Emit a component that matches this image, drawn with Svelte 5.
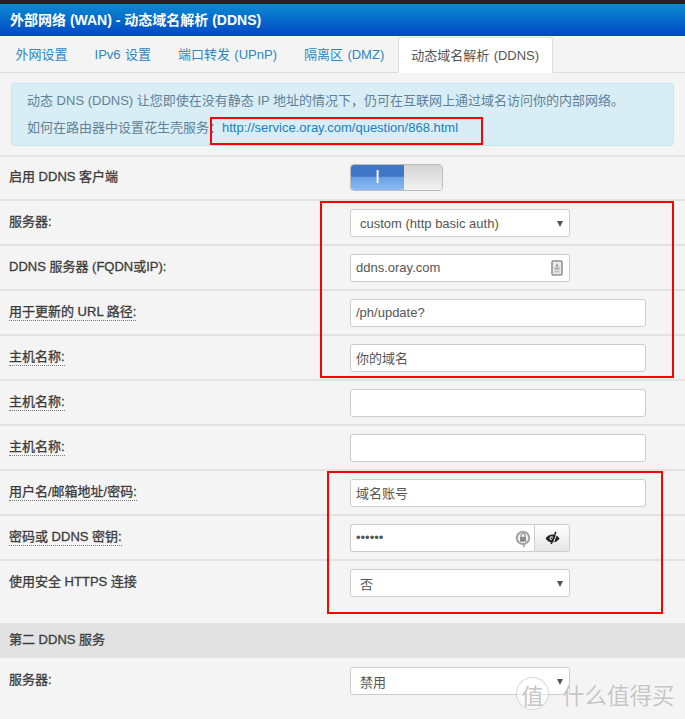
<script lang="ts">
  const rows = [
    { label: "服务器:", kind: "select", value: "custom (http basic auth)" },
    { label: "DDNS 服务器 (FQDN或IP):", kind: "text", value: "ddns.oray.com", short: true, icon: "key" },
    { label: "用于更新的 URL 路径:", kind: "text", value: "/ph/update?", hint: true },
    { label: "主机名称:", kind: "text", value: "你的域名", hint: true },
    { label: "主机名称:", kind: "text", value: "", hint: true },
    { label: "主机名称:", kind: "text", value: "", hint: true },
    { label: "用户名/邮箱地址/密码:", kind: "text", value: "域名账号", hint: true },
    { label: "密码或 DDNS 密钥:", kind: "password", value: "••••••", hint: true },
    { label: "使用安全 HTTPS 连接", kind: "select", value: "否" }
  ];
  const tabs = ["外网设置", "IPv6 设置", "端口转发 (UPnP)", "隔离区 (DMZ)", "动态域名解析 (DDNS)"];
</script>

<div class="page">
  <div class="topbar"></div>
  <h3 class="title">外部网络 (WAN) - 动态域名解析 (DDNS)</h3>

  <ul class="tabs">
    {#each tabs as tab, i}
      <li class:active={i === tabs.length - 1}>{tab}</li>
    {/each}
  </ul>

  <div class="alert">
    <div>动态 DNS (DDNS) 让您即使在没有静态 IP 地址的情况下，仍可在互联网上通过域名访问你的内部网络。</div>
    <div>如何在路由器中设置花生壳服务：<a href="#top">http://service.oray.com/question/868.html</a></div>
  </div>

  <div class="form">
    <div class="row first">
      <span class="label">启用 DDNS 客户端</span>
      <div class="toggle"><span class="on">I</span><span class="off"></span></div>
    </div>

    {#each rows as row}
      <div class="row">
        <span class="label"><span class:hint={row.hint}>{row.label}</span></span>
        {#if row.kind === "select"}
          <div class="select">{row.value}<i class="caret"></i></div>
        {:else if row.kind === "password"}
          <div class="group">
            <div class="input joined">
              <span class="dots">{row.value}</span>
              <svg class="lock" width="16" height="20" viewBox="0 0 14 18">
                <circle cx="7" cy="8" r="5.600" fill="#f2f2f2" stroke="#a3a3a3" stroke-width="1.800" />
                <rect x="4.300" y="7" width="5.400" height="4.400" fill="#8c8c8c" />
                <path d="M5.200 7V5.800a1.800 1.800 0 0 1 3.600 0V7" fill="none" stroke="#8c8c8c" stroke-width="1" />
                <path d="M7 12.500l2.200 2.200L7 17z" fill="#a3a3a3" />
              </svg>
            </div>
            <button class="eye" aria-label="显示密码">
              <svg width="15" height="14" viewBox="0 0 15 14">
                <path d="M.5 7.500C2.300 4.900 4.700 3.500 7.500 3.500S12.700 4.900 14.500 7.500C12.700 10.100 10.300 11.500 7.500 11.500S2.300 10.100 .5 7.500z" fill="#222" />
                <circle cx="6.600" cy="7.300" r="2" fill="#e8e8e8" />
                <circle cx="6.600" cy="7.300" r="0.900" fill="#222" />
                <path d="M10.800 .8L6.200 13" stroke="#222" stroke-width="1.500" />
                <path d="M12.100 1.800L8 13" stroke="#f0f0f0" stroke-width="1" />
              </svg>
            </button>
          </div>
        {:else}
          <div class="input" class:short={row.short}>
            {row.value}
            {#if row.icon}
              <svg class="key" width="12" height="16" viewBox="0 0 12 16">
                <rect x="1" y="1" width="10" height="14" rx="1" fill="#e8e8e8" stroke="#8f8f8f" stroke-width="1.500" />
                <path d="M6 3.500l1.500 3h-3z" fill="#8f8f8f" />
                <rect x="3.500" y="7.500" width="5" height="2" fill="#a5a5a5" />
                <rect x="3.500" y="10.500" width="5" height="2" fill="#c2c2c2" />
              </svg>
            {/if}
          </div>
        {/if}
      </div>
    {/each}

    <div class="section">第二 DDNS 服务</div>

    <div class="row last">
      <span class="label">服务器:</span>
      <div class="select">禁用<i class="caret"></i></div>
    </div>
  </div>

  <!-- hand-drawn annotations from the screenshot -->
  <div class="mark m1"></div>
  <div class="mark m2"></div>
  <div class="mark m3"></div>

  <div class="watermark">
    <span class="seal">值</span>
    <span>什么值得买</span>
  </div>
</div>

<style>
  :global(body) {
    margin: 0;
    background: #f4f4f4;
  }

  .page {
    position: relative;
    width: 685px;
    height: 719px;
    overflow: hidden;
    background: #f4f4f4;
    color: #555;
    font-family: "Liberation Sans", "Noto Sans CJK SC", sans-serif;
    font-size: 13px;
  }

  .topbar {
    height: 4px;
    background: #222;
  }

  .title {
    box-sizing: border-box;
    height: 32px;
    margin: 0;
    padding: 0 10px;
    background: linear-gradient(#0a8bd0, #0247c6);
    color: #fff;
    font-size: 14px;
    font-weight: bold;
    line-height: 32px;
  }

  .tabs {
    display: flex;
    box-sizing: border-box;
    height: 37px;
    margin: 0;
    padding: 1px 0 0 2px;
    border-bottom: 1px solid #ddd;
    list-style: none;
    word-spacing: 0.8px;
  }

  .tabs li {
    box-sizing: border-box;
    height: 36px;
    padding: 0 13.500px;
    color: #2a86c4;
    line-height: 35px;
  }

  .tabs li.active {
    height: 36px;
    border: 1px solid #ddd;
    border-bottom-color: #fff;
    border-radius: 3px 3px 0 0;
    background: #fff;
    color: #555;
    padding: 0 12.500px;
  }

  .alert {
    box-sizing: border-box;
    height: 63px;
    margin: 10px 11px 0;
    padding: 3px 15px;
    border: 1px solid #bce8f1;
    border-radius: 4px;
    background: #d9edf7;
    color: #5f8296;
    line-height: 27px;
  }

  .alert a {
    color: #1b7fbd;
    text-decoration: none;
  }

  .form {
    margin-top: 9px;
    border-top: 2px solid #e2e2e2;
  }

  .row {
    display: flex;
    box-sizing: border-box;
    height: 45px;
    padding: 8px 0 0 9px;
    border-bottom: 2px solid #e2e2e2;
  }

  .row.first {
    height: 44px;
    padding-top: 7px;
  }

  .row.last {
    border-bottom: 0;
    padding-top: 9px;
  }

  .row:has(+ .section) {
    height: 62px;
    border-bottom: 0;
  }

  .label {
    align-self: flex-start;
    width: 341px;
    flex: none;
    margin-top: 4px;
    color: #3c3c3c;
    line-height: 18px;
    -webkit-text-stroke: 0.3px #3c3c3c;
  }

  .hint {
    padding-bottom: 1px;
    border-bottom: 1px dotted #777;
  }

  .select,
  .input {
    display: flex;
    align-items: center;
    box-sizing: border-box;
    height: 28px;
    border: 1px solid #ccc;
    border-radius: 3px;
    background: #fff;
    color: #555;
  }

  .select {
    position: relative;
    width: 220px;
    padding-left: 9px;
  }

  .caret {
    position: absolute;
    right: 6px;
    top: 11px;
    border-top: 6px solid #555;
    border-right: 3px solid transparent;
    border-left: 3px solid transparent;
  }

  .input {
    position: relative;
    width: 296px;
    padding: 0 0 2px 5px;
  }

  .input.short {
    width: 220px;
  }

  .key {
    position: absolute;
    right: 6px;
    top: 5px;
  }

  .group {
    display: flex;
    width: 220px;
  }

  .input.joined {
    width: 184px;
    border-right: 0;
    border-radius: 3px 0 0 3px;
  }

  .dots {
    font-size: 13px;
  }

  .lock {
    position: absolute;
    right: 3px;
    top: 4px;
  }

  .eye {
    display: flex;
    align-items: center;
    justify-content: center;
    box-sizing: border-box;
    width: 36px;
    height: 28px;
    padding: 0;
    border: 1px solid #ccc;
    border-radius: 0 3px 3px 0;
    background: linear-gradient(#fff, #e6e6e6);
  }

  .section {
    box-sizing: border-box;
    height: 35px;
    padding-left: 9px;
    background: #e2e2e2;
    color: #3c3c3c;
    line-height: 33px;
    -webkit-text-stroke: 0.3px #3c3c3c;
  }

  .toggle {
    display: flex;
    box-sizing: border-box;
    width: 93px;
    height: 27px;
    overflow: hidden;
    border: 1px solid #bbb;
    border-radius: 4px;
  }

  .on {
    width: 53px;
    background: linear-gradient(#3f76c8 0 45%, #6a9fe4 50%, #8dbcf2);
    color: #fff;
    font-size: 18px;
    line-height: 25px;
    text-align: center;
  }

  .off {
    flex: 1;
    background: linear-gradient(#d4d4d4, #f2f2f2);
  }

  .mark {
    position: absolute;
    box-sizing: border-box;
    border: 2px solid #f00;
  }

  .m1 { left: 210px; top: 117px; width: 273px; height: 28px; }
  .m2 { left: 320px; top: 201px; width: 354px; height: 177px; }
  .m3 { left: 327px; top: 471px; width: 336px; height: 143px; }

  .watermark {
    position: absolute;
    left: 516px;
    top: 677px;
    display: flex;
    align-items: center;
    gap: 13px;
    color: #c6c6c6;
    font-size: 22.500px;
    text-shadow: 0 0 2px #fff;
  }

  .seal {
    display: flex;
    align-items: center;
    justify-content: center;
    width: 33px;
    height: 33px;
    border-radius: 50%;
    background: rgba(255, 255, 255, 0.55);
    border: 1px solid rgba(205, 205, 205, 0.8);
    box-sizing: border-box;
    font-size: 22px;
  }
</style>
